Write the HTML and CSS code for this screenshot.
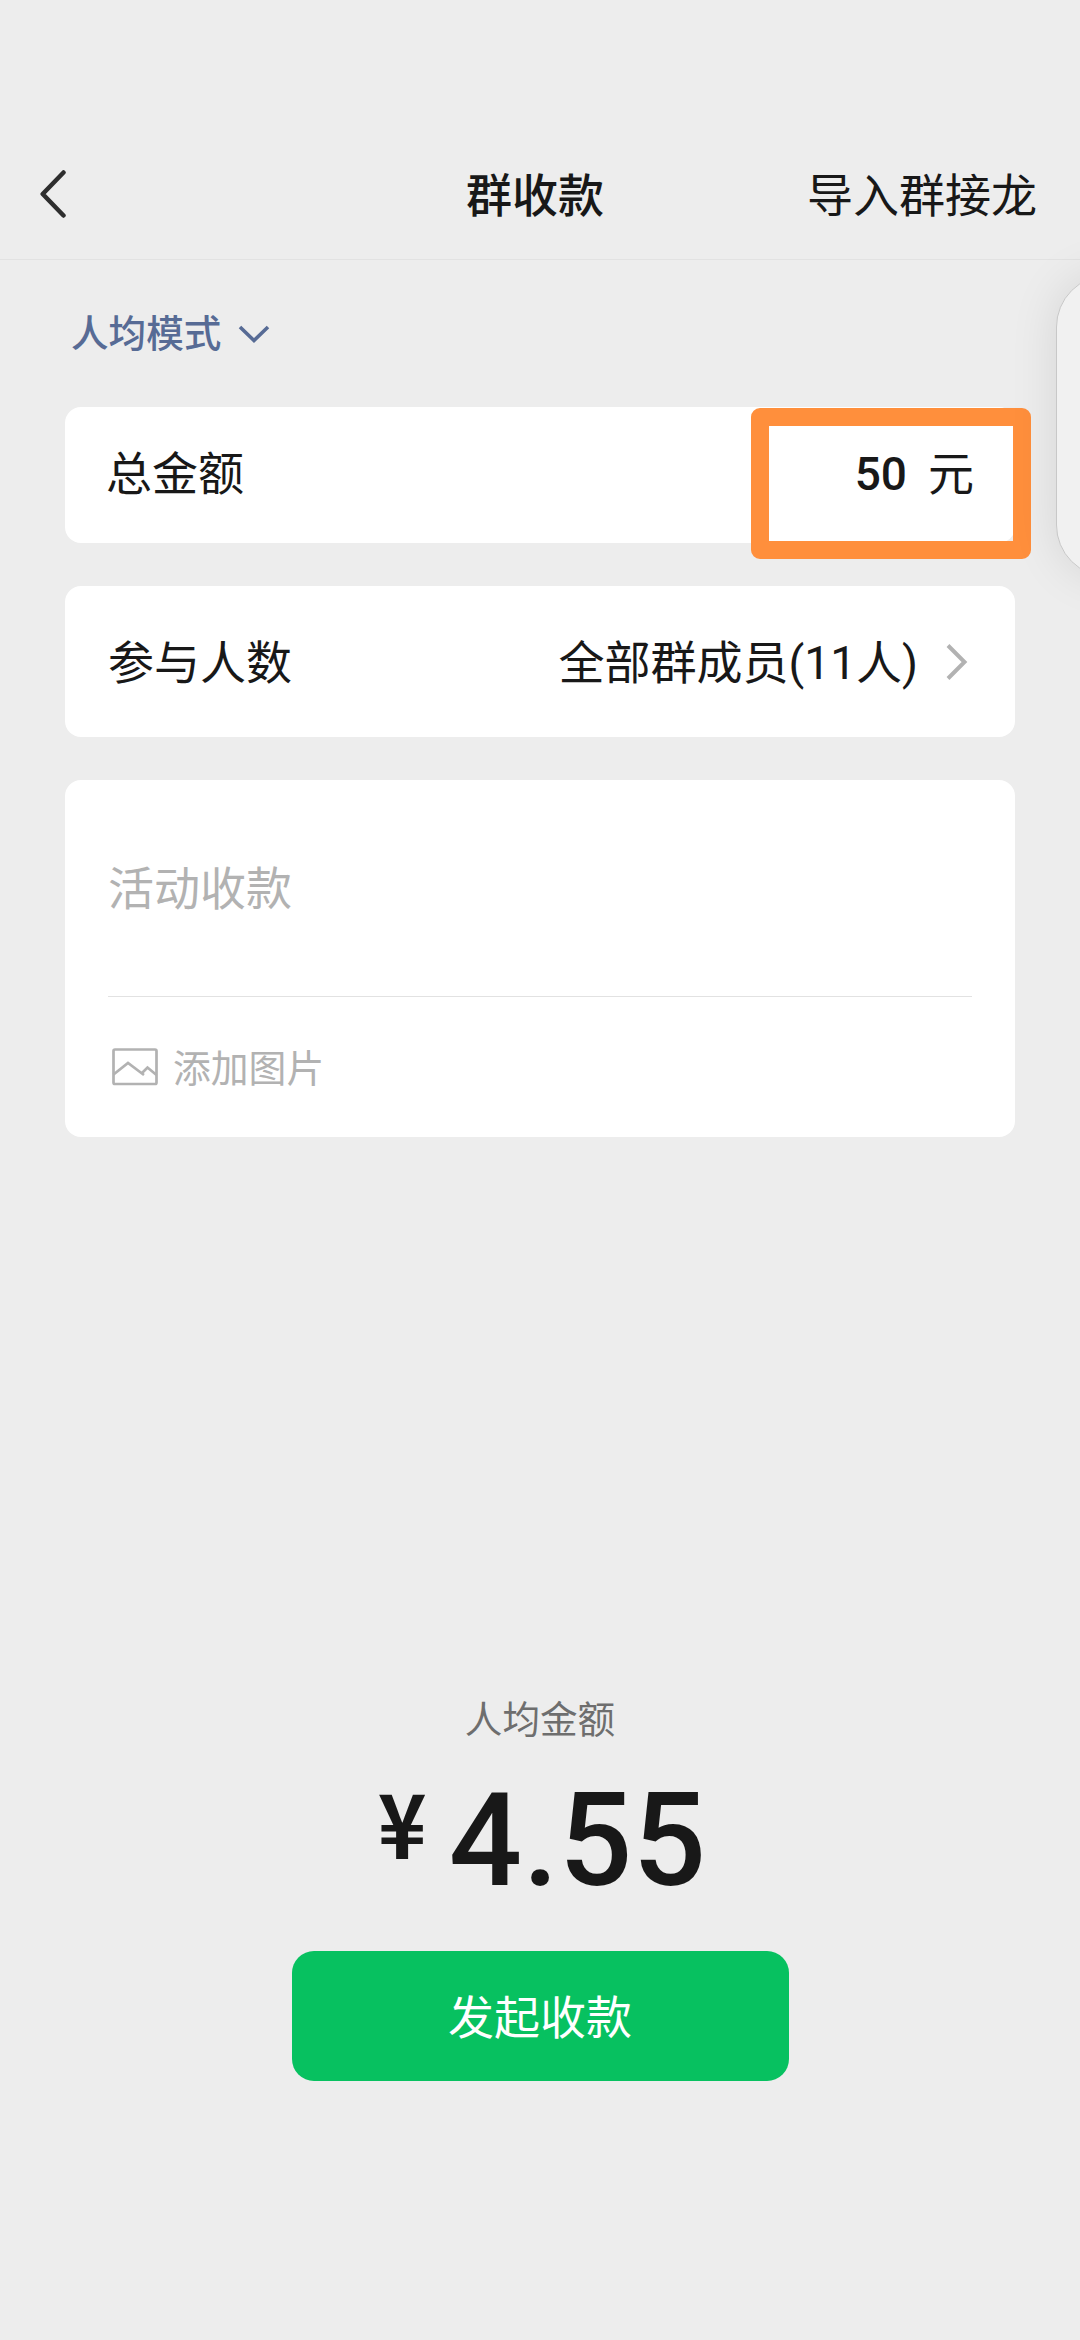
FILE: index.html
```html
<!DOCTYPE html>
<html lang="zh-CN">
<head>
<meta charset="utf-8">
<title>群收款</title>
<link rel="stylesheet" href="styles.css">
</head>
<body>
<div class="page">
  <header class="navbar">
    <svg class="back" width="30" height="52" viewBox="0 0 30 52"><path d="M23.500 4.500 2.700 26l20.800 21.500"/></svg>
    <h1 class="title">群收款</h1>
    <a class="nav-action">导入群接龙</a>
  </header>
  <main class="content">
    <div class="mode">
      <span>人均模式</span>
      <svg width="32" height="18" viewBox="0 0 32 18"><path d="M2 2l14 13.500L30 2"/></svg>
    </div>
    <section class="card amount-card">
      <span class="label">总金额</span>
      <span class="amount"><b>50</b><span>元</span></span>
      <div class="highlight"></div>
    </section>
    <section class="card member-card">
      <span class="label">参与人数</span>
      <span class="members">全部群成员<span class="latin">(11</span>人<span class="latin">)</span></span>
      <svg class="chevron" width="22" height="38" viewBox="0 0 22 38"><path d="M2 2.500 18.500 19 2 35.500"/></svg>
    </section>
    <section class="card note-card">
      <div class="note">活动收款</div>
      <div class="add-image">
        <svg width="46" height="38" viewBox="0 0 46 38"><rect x="1.500" y="1.500" width="43" height="34.500" rx="1.500"/><path d="M1.500 26.500 16 15 32 27M29 26 35.500 19.500l9 7.500"/></svg>
        <span>添加图片</span>
      </div>
    </section>
  </main>
  <footer class="summary">
    <div class="summary-label">人均金额</div>
    <div class="total"><span class="currency">¥</span><span class="value">4.55</span></div>
    <button class="submit">发起收款</button>
  </footer>
  <div class="side-panel"></div>
</div>
</body>
</html>
```
FILE: styles.css
```css
* { box-sizing: border-box; }
body {
  margin: 0;
  background: #ededed;
  color: #181818;
  font-family: "Noto Sans CJK SC", sans-serif;
  font-size: 46px;
  line-height: 60px;
}
svg { display: block; fill: none; flex: none; }
.page {
  position: relative;
  display: flex;
  flex-direction: column;
  width: 1080px;
  height: 2340px;
  overflow: hidden;
}
.navbar {
  display: grid;
  grid-template-columns: 1fr auto 1fr;
  align-items: center;
  height: 260px;
  padding: 124px 43px 0 40px;
  border-bottom: 1px solid #e2e2e2;
}
.back { stroke: #2e2e2e; stroke-width: 4.5; stroke-linecap: round; stroke-linejoin: round; margin-top: 5px; }
.title { margin: 0 7px 0 0; font-size: 46px; font-weight: 500; line-height: 60px; }
.nav-action { justify-self: end; white-space: nowrap; }
.content { padding: 46px 65px 0; }
.mode {
  display: flex;
  align-items: center;
  gap: 17px;
  height: 50px;
  margin: 0 0 51px 6px;
  color: #576b95;
  font-size: 37.6px;
  line-height: 50px;
  font-weight: 500;
}
.mode svg { stroke: #576b95; stroke-width: 3.6; margin-top: 6px; }
.card {
  position: relative;
  display: flex;
  background: #fff;
  border-radius: 16px;
  padding: 0 43px;
  margin-bottom: 43px;
}
.amount-card { height: 136px; padding: 33px 41px 0; justify-content: space-between; }
.amount { display: flex; align-items: baseline; gap: 21px; }
.amount b { font-family: Roboto, sans-serif; font-weight: 500; line-height: 46px; }
.latin { font-family: Roboto, sans-serif; line-height: 46px; }
.highlight {
  position: absolute;
  left: 686px;
  top: 1px;
  width: 280px;
  height: 151px;
  border: 18px solid #ff8f3c;
  border-radius: 9px;
}
.member-card { height: 151px; align-items: center; padding-bottom: 5px; }
.members { margin-left: auto; }
.chevron { stroke: #b2b2b2; stroke-width: 4; margin: 5px 4px 0 28px; }
.note-card { flex-direction: column; height: 357px; margin: 0; color: #b2b2b2; }
.note { height: 217px; padding-top: 75px; border-bottom: 1px solid #e2e2e2; }
.add-image {
  display: flex;
  align-items: center;
  gap: 15px;
  padding: 44px 0 0 4px;
  font-size: 37.8px;
  line-height: 50px;
}
.add-image svg { stroke: #b2b2b2; stroke-width: 2.7; margin-top: 2px; }
.summary {
  display: flex;
  flex-direction: column;
  align-items: center;
  margin-top: auto;
  padding-bottom: 259px;
}
.summary-label { color: #6e6e6e; font-size: 37.6px; line-height: 50px; }
.total {
  display: flex;
  align-items: flex-start;
  height: 209px;
}
.currency {
  font-size: 89px;
  line-height: 90px;
  font-weight: 700;
  margin: 34px 20px 0 3px;
  transform: scaleX(.93);
}
.value {
  font-family: Roboto, sans-serif;
  font-size: 129px;
  font-weight: 500;
  line-height: 120px;
  letter-spacing: .5px;
  margin-top: 39px;
}
.submit {
  width: 497px;
  height: 130px;
  padding: 0 0 4px;
  border: 0;
  border-radius: 22px;
  background: #07c160;
  color: #fff;
  font: inherit;
}
.side-panel {
  position: absolute;
  left: 1056px;
  top: 275px;
  width: 120px;
  height: 302px;
  border: 1.5px solid #c8c8c8;
  border-radius: 52px;
  background: #f1f1f1;
  box-shadow: 0 0 48px rgba(0, 0, 0, .1);
}
```
